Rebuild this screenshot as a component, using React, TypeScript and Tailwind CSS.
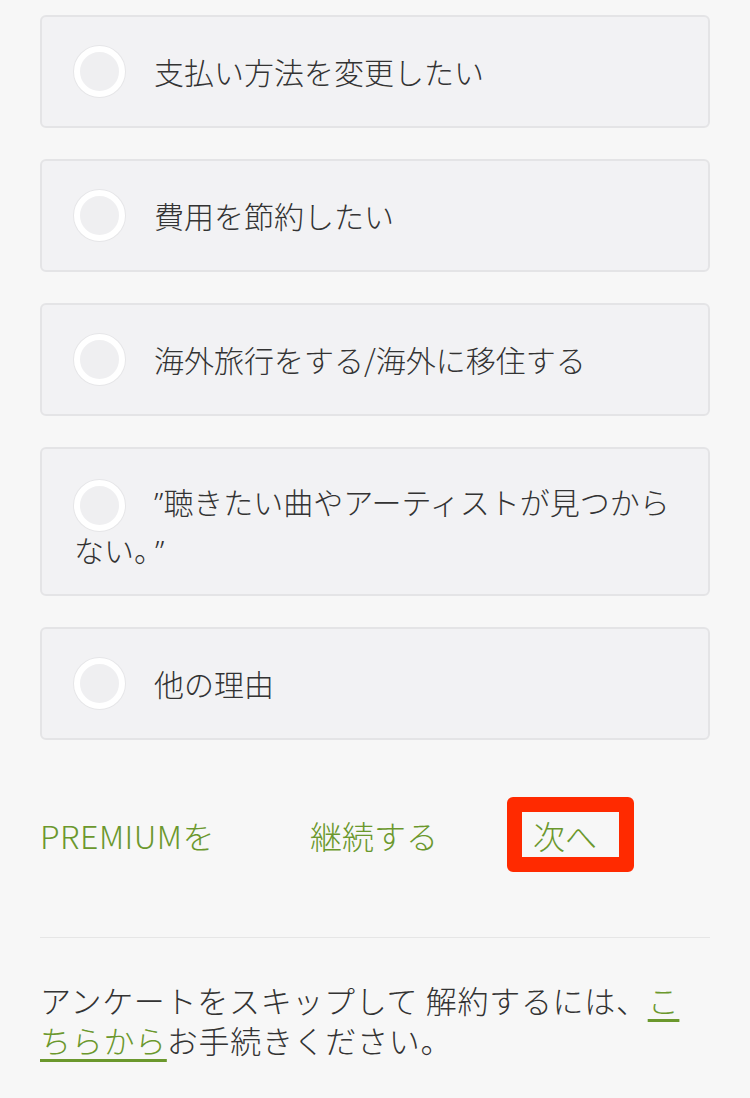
import React from "react";

const font = { fontFamily: '"Noto Sans CJK JP", "Noto Sans", sans-serif' };
const latin = { fontFamily: '"Noto Sans", sans-serif' };

function Radio({ inline }: { inline?: boolean }) {
  return (
    <span
      className={`${inline ? "inline-block align-middle -my-[4px]" : "block shrink-0"} w-[51px] h-[51px] mr-[29px] rounded-full border-[6px] border-white bg-[#efeff1] shadow-[0_0_0_1px_#e6e6e8]`}
    />
  );
}

function Option({ children }: { children: React.ReactNode }) {
  return (
    <div className="flex h-[113px] items-center rounded-[6px] border-2 border-[#e4e4e6] bg-[#f2f2f4] pl-[32px] pr-[20px] text-[30px] text-[#333333]">
      <Radio />
      <span>{children}</span>
    </div>
  );
}

export default function App() {
  return (
    <div className="min-h-[1098px] w-[750px] bg-[#f7f7f7] px-[40px] pt-[15px] pb-[40px] font-light" style={font}>
      <div className="flex flex-col gap-[31px]">
        <Option>支払い方法を変更したい</Option>
        <Option>費用を節約したい</Option>
        <Option>海外旅行をする/海外に移住する</Option>
        <div className="h-[149px] rounded-[6px] border-2 border-[#e4e4e6] bg-[#f2f2f4] pl-[32px] pr-[20px] pt-[30px] text-[30px] leading-[44px] text-[#333333]">
          <Radio inline />
          <span style={latin}>”</span>聴きたい曲やアーティストが見つからない。
          <span style={latin} className="ml-[6px]">”</span>
        </div>
        <Option>他の理由</Option>
      </div>

      <div className="mt-[57px] flex h-[75px] items-center text-[32px] text-[#6b982d]">
        <span className="tracking-[0.5px]">PREMIUMを</span>
        <span className="ml-[95px]">継続する</span>
        <div className="ml-[69px] flex h-[75px] w-[127px] items-center rounded-[6px] border-[15px] border-[#ff2a00] pl-[11px]">
          <span className="leading-none">次へ</span>
        </div>
      </div>

      <div className="mt-[65px] h-px bg-[#e6e6e6]" />

      <p className="mt-[42px] text-[31px] leading-[40px] tracking-[0.7px] text-[#333333]">
        アンケートをスキップして 解約するには、
        <a className="text-[#6b982d] underline decoration-[3px] underline-offset-[6px]">
          こ<br />ちらから
        </a>
        お手続きください。
      </p>
    </div>
  );
}
